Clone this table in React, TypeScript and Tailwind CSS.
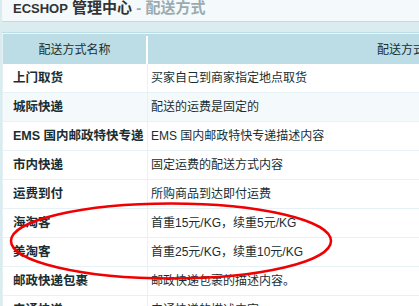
import React from "react";

type Shipping = {
  name: string;
  desc: string;
  hover?: boolean;
};

const shippingList: Shipping[] = [
  { name: "上门取货", desc: "买家自己到商家指定地点取货" },
  { name: "城际快递", desc: "配送的运费是固定的", hover: true },
  { name: "EMS 国内邮政特快专递", desc: "EMS 国内邮政特快专递描述内容" },
  { name: "市内快递", desc: "固定运费的配送方式内容" },
  { name: "运费到付", desc: "所购商品到达即付运费" },
  { name: "海淘客", desc: "首重15元/KG，续重5元/KG" },
  { name: "美淘客", desc: "首重25元/KG，续重10元/KG" },
  { name: "邮政快递包裹", desc: "邮政快递包裹的描述内容。" },
  { name: "申通快递", desc: "申通快递的描述内容" },
];

const App = () => {
  return (
    <div
      className="relative w-[419px] h-[306px] overflow-hidden bg-[#dbecf0] pl-[2px] text-[#192e32]"
      style={{ fontFamily: '"Liberation Sans", "Noto Sans CJK SC", sans-serif' }}
    >
      {/* title bar */}
      <div className="h-[22px] bg-[#f4f9fb] border-b border-[#bcdde5] pl-[11px] leading-[15px] whitespace-nowrap">
        <span className="text-[15px] font-bold text-[#333]">
          <span className="text-[13px]">ECSHOP</span> 管理中心
        </span>
        <span className="text-[15px] font-bold text-[#9aabb0]"> - 配送方式</span>
      </div>

      <div className="h-[10px]" />

      {/* list */}
      <div className="border-t border-[#bcdde5] pt-px bg-[#eef6f8]">
        <div className="w-[676px] bg-white border-l border-[#e3f0f4]">
          <div className="flex h-[30px] bg-[#bcdde5] text-[12px] pt-[2px]">
            <div className="w-[145px] flex items-center justify-center border-r-2 border-white">
              配送方式名称
            </div>
            <div className="flex-1 flex items-center justify-center">配送方式描述</div>
          </div>
          {shippingList.map((item) => (
            <div
              key={item.name}
              className={`flex h-[29px] border-b border-[#e6f2f5] ${item.hover ? "bg-[#f4f9fb]" : "bg-white"}`}
            >
              <div className="w-[145px] flex items-center pl-[10px] border-r border-[#e6f2f5] text-[12.5px] font-bold whitespace-nowrap">
                {item.name}
              </div>
              <div className="flex-1 flex items-center pl-[3px] text-[12px] whitespace-nowrap">
                {item.desc}
              </div>
            </div>
          ))}
        </div>
      </div>

      {/* red marker ring around the overseas rows */}
      <svg
        className="absolute left-0 top-0 pointer-events-none"
        width="419"
        height="306"
        viewBox="0 0 419 306"
      >
        <ellipse
          cx="171"
          cy="241"
          rx="160"
          ry="37.5"
          fill="none"
          stroke="#f00000"
          strokeWidth="2.5"
        />
      </svg>
    </div>
  );
};

export default App;
